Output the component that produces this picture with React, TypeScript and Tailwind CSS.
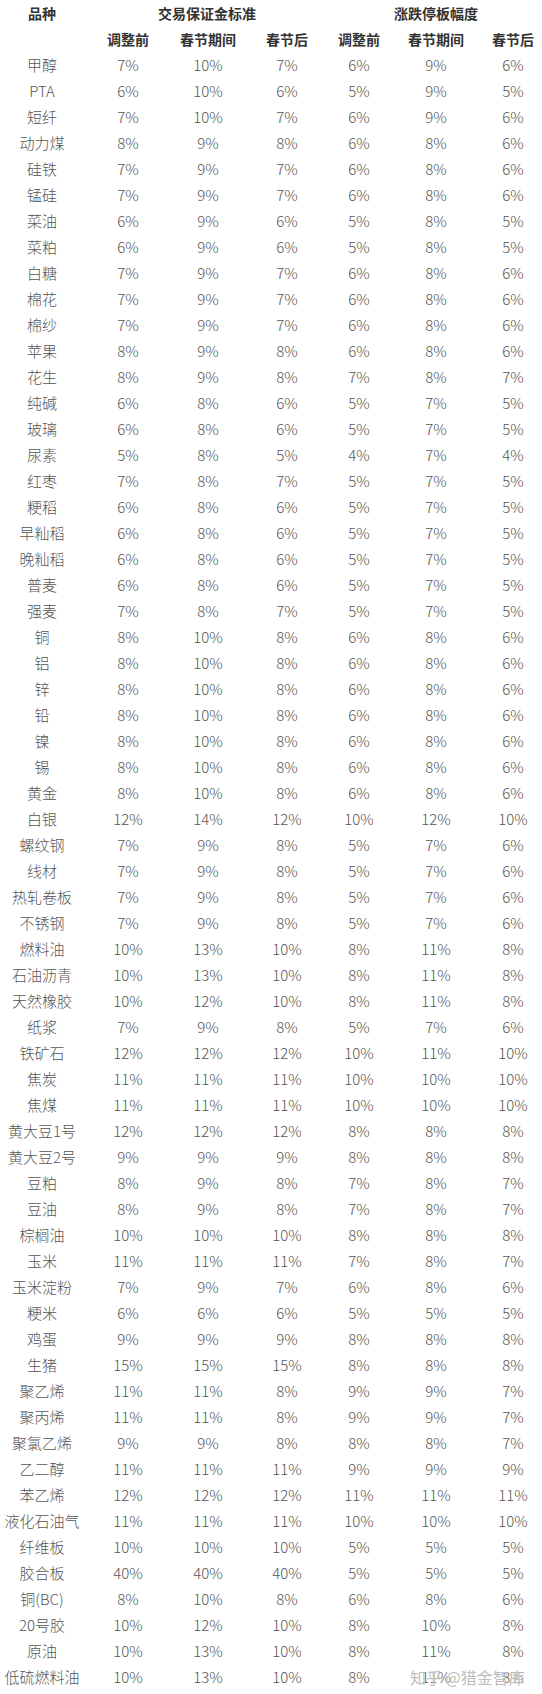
import React from "react";

type Row = [string, number, number, number, number, number, number];

const rows: Row[] = [
  ["甲醇", 7, 10, 7, 6, 9, 6],
  ["PTA", 6, 10, 6, 5, 9, 5],
  ["短纤", 7, 10, 7, 6, 9, 6],
  ["动力煤", 8, 9, 8, 6, 8, 6],
  ["硅铁", 7, 9, 7, 6, 8, 6],
  ["锰硅", 7, 9, 7, 6, 8, 6],
  ["菜油", 6, 9, 6, 5, 8, 5],
  ["菜粕", 6, 9, 6, 5, 8, 5],
  ["白糖", 7, 9, 7, 6, 8, 6],
  ["棉花", 7, 9, 7, 6, 8, 6],
  ["棉纱", 7, 9, 7, 6, 8, 6],
  ["苹果", 8, 9, 8, 6, 8, 6],
  ["花生", 8, 9, 8, 7, 8, 7],
  ["纯碱", 6, 8, 6, 5, 7, 5],
  ["玻璃", 6, 8, 6, 5, 7, 5],
  ["尿素", 5, 8, 5, 4, 7, 4],
  ["红枣", 7, 8, 7, 5, 7, 5],
  ["粳稻", 6, 8, 6, 5, 7, 5],
  ["早籼稻", 6, 8, 6, 5, 7, 5],
  ["晚籼稻", 6, 8, 6, 5, 7, 5],
  ["普麦", 6, 8, 6, 5, 7, 5],
  ["强麦", 7, 8, 7, 5, 7, 5],
  ["铜", 8, 10, 8, 6, 8, 6],
  ["铝", 8, 10, 8, 6, 8, 6],
  ["锌", 8, 10, 8, 6, 8, 6],
  ["铅", 8, 10, 8, 6, 8, 6],
  ["镍", 8, 10, 8, 6, 8, 6],
  ["锡", 8, 10, 8, 6, 8, 6],
  ["黄金", 8, 10, 8, 6, 8, 6],
  ["白银", 12, 14, 12, 10, 12, 10],
  ["螺纹钢", 7, 9, 8, 5, 7, 6],
  ["线材", 7, 9, 8, 5, 7, 6],
  ["热轧卷板", 7, 9, 8, 5, 7, 6],
  ["不锈钢", 7, 9, 8, 5, 7, 6],
  ["燃料油", 10, 13, 10, 8, 11, 8],
  ["石油沥青", 10, 13, 10, 8, 11, 8],
  ["天然橡胶", 10, 12, 10, 8, 11, 8],
  ["纸浆", 7, 9, 8, 5, 7, 6],
  ["铁矿石", 12, 12, 12, 10, 11, 10],
  ["焦炭", 11, 11, 11, 10, 10, 10],
  ["焦煤", 11, 11, 11, 10, 10, 10],
  ["黄大豆1号", 12, 12, 12, 8, 8, 8],
  ["黄大豆2号", 9, 9, 9, 8, 8, 8],
  ["豆粕", 8, 9, 8, 7, 8, 7],
  ["豆油", 8, 9, 8, 7, 8, 7],
  ["棕榈油", 10, 10, 10, 8, 8, 8],
  ["玉米", 11, 11, 11, 7, 8, 7],
  ["玉米淀粉", 7, 9, 7, 6, 8, 6],
  ["粳米", 6, 6, 6, 5, 5, 5],
  ["鸡蛋", 9, 9, 9, 8, 8, 8],
  ["生猪", 15, 15, 15, 8, 8, 8],
  ["聚乙烯", 11, 11, 8, 9, 9, 7],
  ["聚丙烯", 11, 11, 8, 9, 9, 7],
  ["聚氯乙烯", 9, 9, 8, 8, 8, 7],
  ["乙二醇", 11, 11, 11, 9, 9, 9],
  ["苯乙烯", 12, 12, 12, 11, 11, 11],
  ["液化石油气", 11, 11, 11, 10, 10, 10],
  ["纤维板", 10, 10, 10, 5, 5, 5],
  ["胶合板", 40, 40, 40, 5, 5, 5],
  ["铜(BC)", 8, 10, 8, 6, 8, 6],
  ["20号胶", 10, 12, 10, 8, 10, 8],
  ["原油", 10, 13, 10, 8, 11, 8],
  ["低硫燃料油", 10, 13, 10, 8, 11, 8],
];

const subHeads = ["调整前", "春节期间", "春节后", "调整前", "春节期间", "春节后"];

// column widths picked so that each cell centre lands where the screenshot has it
const grid = "grid grid-cols-[84px_88px_72px_86px_58px_96px_58px]";

export default function App() {
  return (
    <div
      className="relative w-[542px] bg-white leading-[26px]"
      style={{ fontFamily: '"Noto Sans CJK SC", "Noto Sans", sans-serif' }}
    >
      <div className={`${grid} text-[14px] font-bold text-[#333]`}>
        <div className="h-[26px] text-center">品种</div>
        <div className="col-span-3 h-[26px] text-center">交易保证金标准</div>
        <div className="col-span-3 h-[26px] text-center">涨跌停板幅度</div>
      </div>
      <div className={`${grid} text-[14px] font-bold text-[#333]`}>
        <div className="h-[26px]" />
        {subHeads.map((h, i) => (
          <div key={i} className="h-[26px] text-center">
            {h}
          </div>
        ))}
      </div>

      {rows.map(([name, ...vals]) => (
        <div key={name} className={`${grid} text-[15px] font-light text-[#555]`}>
          <div className="h-[26px] whitespace-nowrap text-center">{name}</div>
          {vals.map((v, i) => (
            <div key={i} className="h-[26px] text-center">
              {v}%
            </div>
          ))}
        </div>
      ))}

      {/* zhihu watermark */}
      <div className="pointer-events-none absolute bottom-[3px] left-[410px] whitespace-nowrap text-[16px] leading-[20px] text-[#bdbdbd] [text-shadow:0_0_1px_#fff]">
        知乎 @猎金智库
      </div>
    </div>
  );
}
